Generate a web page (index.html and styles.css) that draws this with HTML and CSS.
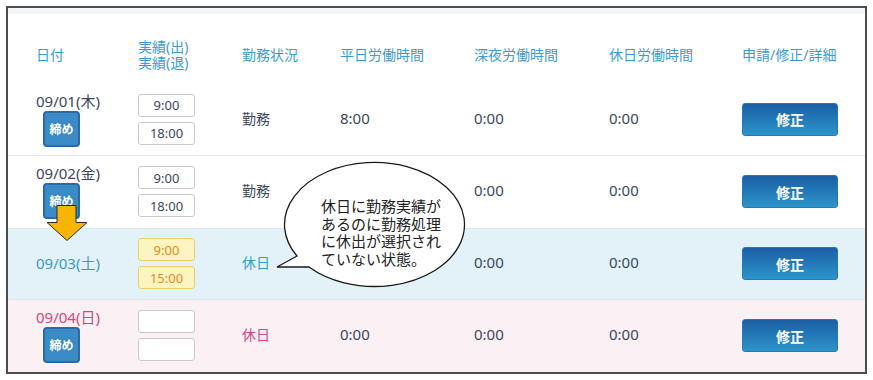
FILE: index.html
```html
<!DOCTYPE html>
<html lang="ja">
<head>
<meta charset="utf-8">
<title>勤務実績</title>
<link rel="stylesheet" href="styles.css">
</head>
<body>
<div class="frame">
  <div class="strip"></div>
  <div class="grid head">
    <div>日付</div>
    <div>実績(出)<br>実績(退)</div>
    <div>勤務状況</div>
    <div>平日労働時間</div>
    <div>深夜労働時間</div>
    <div>休日労働時間</div>
    <div>申請/修正/詳細</div>
  </div>

  <div class="grid row r1">
    <div class="datecell"><span class="date">09/01(木)</span><span class="shime">締め</span></div>
    <div class="times"><span class="tbox">9:00</span><span class="tbox">18:00</span></div>
    <div class="status">勤務</div>
    <div class="val">8:00</div>
    <div class="val">0:00</div>
    <div class="val">0:00</div>
    <div><span class="fix">修正</span></div>
  </div>

  <div class="grid row r2">
    <div class="datecell"><span class="date">09/02(金)</span><span class="shime">締め</span></div>
    <div class="times"><span class="tbox">9:00</span><span class="tbox">18:00</span></div>
    <div class="status">勤務</div>
    <div class="val"></div>
    <div class="val">0:00</div>
    <div class="val">0:00</div>
    <div><span class="fix">修正</span></div>
  </div>

  <div class="grid row r3 sat">
    <div class="datecell"><span class="date">09/03(土)</span></div>
    <div class="times"><span class="tbox warn">9:00</span><span class="tbox warn">15:00</span></div>
    <div class="status">休日</div>
    <div class="val"></div>
    <div class="val">0:00</div>
    <div class="val">0:00</div>
    <div><span class="fix">修正</span></div>
  </div>

  <div class="grid row r4 sun">
    <div class="datecell"><span class="date">09/04(日)</span><span class="shime">締め</span></div>
    <div class="times"><span class="tbox"></span><span class="tbox"></span></div>
    <div class="status">休日</div>
    <div class="val">0:00</div>
    <div class="val">0:00</div>
    <div class="val">0:00</div>
    <div><span class="fix">修正</span></div>
  </div>

  <svg class="arrow" width="44" height="40" viewBox="0 0 44 40">
    <polygon points="13,3.5 32,3.5 32,20.5 43,20.5 23,38.5 3,20.5 13,20.5" fill="#f7b500" stroke="#2b2b2b" stroke-width="1"/>
  </svg>

  <div class="bubble">
    <svg class="bubble-shape" width="210" height="150" viewBox="0 0 210 150">
      <path d="M27,106 L7,117 L39,117 A90,62 0 1 0 27,106 Z" fill="#ffffff" stroke="#1a1a1a" stroke-width="1.3"/>
    </svg>
    <div class="bubble-text">休日に勤務実績が<br>あるのに勤務処理<br>に休出が選択され<br>ていない状態。</div>
  </div>
</div>
</body>
</html>
```

FILE: styles.css
```css
* { box-sizing: border-box; }
body {
  margin: 0;
  background: #ffffff;
  font-family: "Noto Sans", "Noto Sans CJK JP", sans-serif;
}
.frame {
  position: relative;
  margin: 6px 0 0 6px;
  width: 861px;
  height: 368px;
  border: 2px solid #4d4d4d;
  background: #ffffff;
  overflow: hidden;
}
.strip {
  height: 6px;
  background: #f3f6f8;
}
.grid {
  display: grid;
  grid-template-columns: 102px 104px 98px 134px 135px 133px 1fr;
  padding-left: 28px;
  align-items: center;
}
.head {
  height: 71px;
  padding-top: 10px;
  font-size: 14px;
  line-height: 16px;
  color: #3e9ad2;
}
.row {
  color: #3a4859;
}
.r1 { height: 70px; padding-bottom: 2px; }
.r2 { height: 73px; border-top: 1px solid #e1e7ec; padding-bottom: 1px; }
.r3 { height: 71px; border-top: 1px solid #e1e7ec; background: #e3f2f9; padding-bottom: 1px; }
.r4 { height: 73px; border-top: 1px solid #e1e7ec; background: #fbf0f4; padding-bottom: 1px; }

.datecell {
  display: flex;
  flex-direction: column;
  align-items: flex-start;
}
.date {
  font-size: 15px;
  line-height: 18px;
  margin-bottom: 1px;
}
.shime {
  margin-left: 7px;
  width: 37px;
  height: 36px;
  display: flex;
  align-items: center;
  justify-content: center;
  background: #3b8bc6;
  border: 2px solid #2a6aa6;
  border-radius: 4px;
  color: #ffffff;
  font-size: 12px;
  font-weight: 700;
}
.times {
  display: flex;
  flex-direction: column;
  gap: 5px;
}
.tbox {
  width: 57px;
  height: 23px;
  display: flex;
  align-items: center;
  justify-content: center;
  border: 1px solid #c6cacf;
  border-radius: 3px;
  background: #ffffff;
  font-size: 13px;
  color: #3a4859;
}
.tbox.warn {
  background: #fcf4c1;
  border-color: #ebd15a;
  color: #e8891f;
}
.status {
  font-size: 14px;
  margin-bottom: 3px;
}
.val {
  font-size: 15px;
  margin-bottom: 3px;
}
.fix {
  display: flex;
  align-items: center;
  justify-content: center;
  width: 96px;
  height: 33px;
  border-radius: 3px;
  border: 1px solid #2479b8;
  background: linear-gradient(#1b5ea5, #2c95ca);
  color: #ffffff;
  font-size: 14px;
  font-weight: 700;
}
.sat .date, .sat .status { color: #3b9bc6; }
.sun .date, .sun .status { color: #d0497d; }

.arrow {
  position: absolute;
  left: 36px;
  top: 194px;
}
.bubble {
  position: absolute;
  left: 262px;
  top: 142px;
  width: 210px;
  height: 150px;
}
.bubble-shape {
  position: absolute;
  left: 0;
  top: 0;
}
.bubble-text {
  position: absolute;
  left: 51px;
  top: 48px;
  font-size: 15px;
  line-height: 17.6px;
  color: #222222;
  white-space: nowrap;
}
```
